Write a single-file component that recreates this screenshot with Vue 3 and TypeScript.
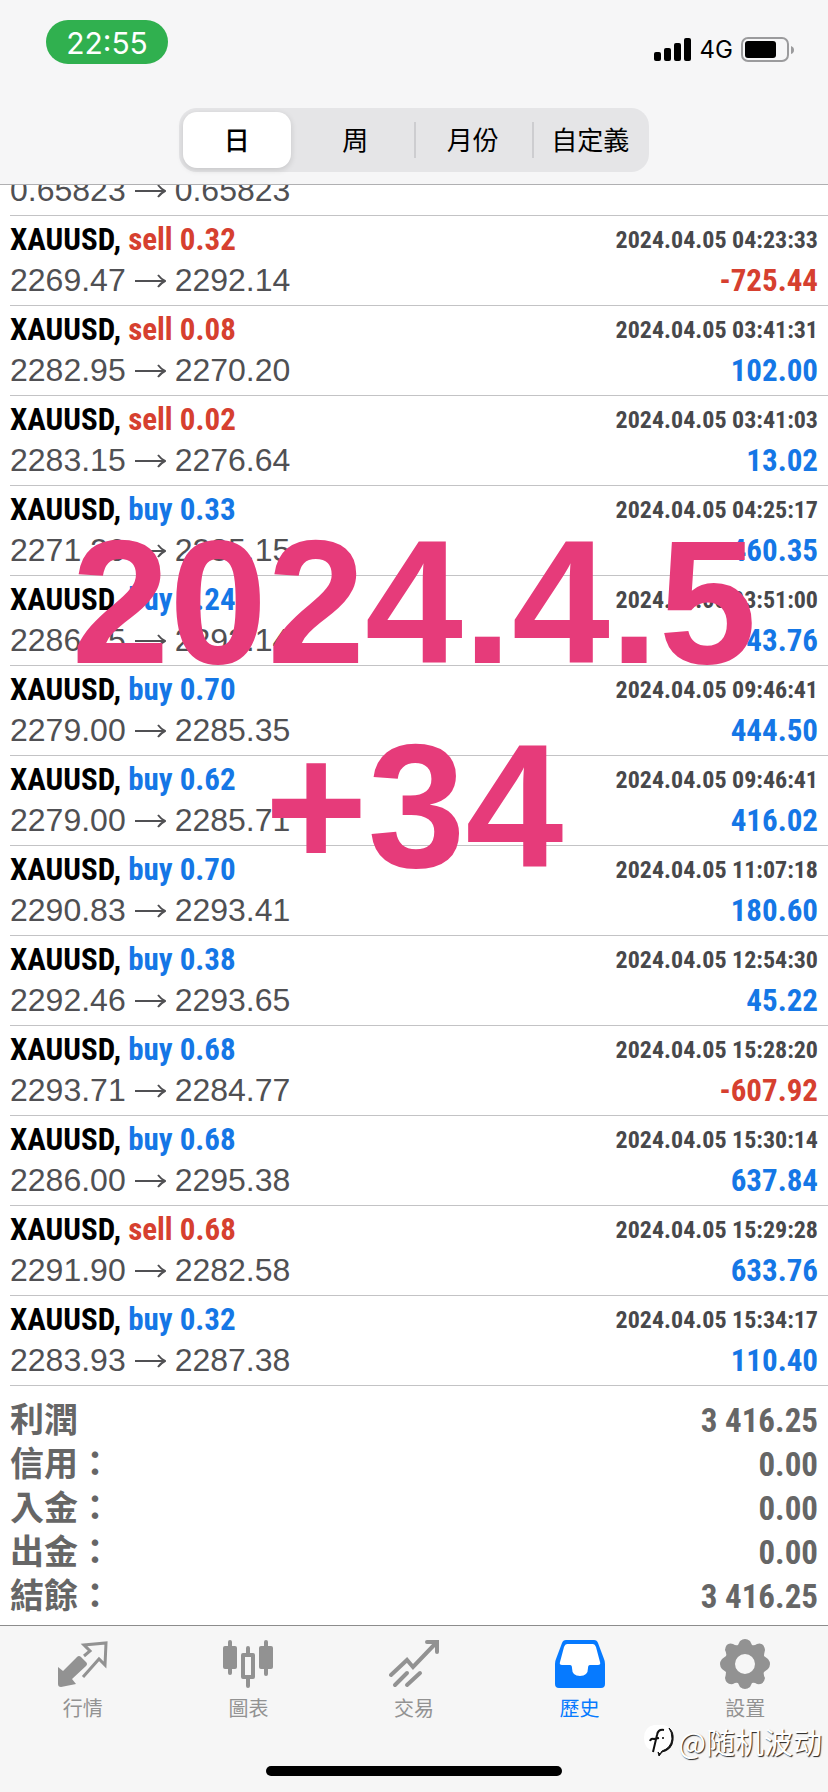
<script setup lang="ts">
import { ref } from 'vue'

interface Deal {
  side: 'buy' | 'sell'
  volume: string
  open: string
  close: string
  time: string
  profit: string
}

const periods: string[] = ['日', '周', '月份', '自定義']
const period = ref(0)

const makeDeal = (
  side: 'buy' | 'sell',
  volume: string,
  open: string,
  close: string,
  time: string,
  profit: string,
): Deal => ({ side, volume, open, close, time, profit })

const deals: Deal[] = [
  makeDeal('sell', '0.32', '2269.47', '2292.14', '04:23:33', '-725.44'),
  makeDeal('sell', '0.08', '2282.95', '2270.20', '03:41:31', '102.00'),
  makeDeal('sell', '0.02', '2283.15', '2276.64', '03:41:03', '13.02'),
  makeDeal('buy', '0.33', '2271.20', '2285.15', '04:25:17', '460.35'),
  makeDeal('buy', '0.24', '2286.15', '2292.14', '03:51:00', '143.76'),
  makeDeal('buy', '0.70', '2279.00', '2285.35', '09:46:41', '444.50'),
  makeDeal('buy', '0.62', '2279.00', '2285.71', '09:46:41', '416.02'),
  makeDeal('buy', '0.70', '2290.83', '2293.41', '11:07:18', '180.60'),
  makeDeal('buy', '0.38', '2292.46', '2293.65', '12:54:30', '45.22'),
  makeDeal('buy', '0.68', '2293.71', '2284.77', '15:28:20', '-607.92'),
  makeDeal('buy', '0.68', '2286.00', '2295.38', '15:30:14', '637.84'),
  makeDeal('sell', '0.68', '2291.90', '2282.58', '15:29:28', '633.76'),
  makeDeal('buy', '0.32', '2283.93', '2287.38', '15:34:17', '110.40'),
]

const totals: { label: string; value: string }[] = [
  { label: '利潤', value: '3 416.25' },
  { label: '信用：', value: '0.00' },
  { label: '入金：', value: '0.00' },
  { label: '出金：', value: '0.00' },
  { label: '結餘：', value: '3 416.25' },
]

const tabs: { id: string; label: string }[] = [
  { id: 'quotes', label: '行情' },
  { id: 'chart', label: '圖表' },
  { id: 'trade', label: '交易' },
  { id: 'history', label: '歷史' },
  { id: 'settings', label: '設置' },
]
const tab = ref('history')
</script>

<template>
  <div class="screen">
    <header class="top">
      <div class="status">
        <span class="clock">22:55</span>
        <div class="indicators">
          <svg class="signal" viewBox="0 0 38 24" aria-hidden="true">
            <rect x="0" y="14" width="7" height="9" rx="2" />
            <rect x="10" y="10" width="7" height="13" rx="2" />
            <rect x="20" y="5" width="7" height="18" rx="2" />
            <rect x="30" y="0" width="7" height="23" rx="2" />
          </svg>
          <span class="network">4G</span>
          <svg class="battery" viewBox="0 0 54 26" aria-hidden="true">
            <rect x="1" y="1" width="46" height="23" rx="6" fill="none" stroke="#9b9b9d" stroke-width="2" />
            <rect x="4" y="4" width="31" height="17" rx="3" />
            <path d="M50 9q3 1 3 4t-3 4z" fill="#9b9b9d" />
          </svg>
        </div>
      </div>
      <div class="segments" role="group" aria-label="期間">
        <button
          v-for="(name, i) in periods"
          :key="name"
          type="button"
          :class="{ selected: period === i, divided: i > 1 }"
          :aria-pressed="period === i"
          @click="period = i"
        >
          {{ name }}
        </button>
      </div>
    </header>

    <main class="history">
      <ul class="deals">
        <li class="deal partial">
          <span class="prices">
            <span>0.65823</span>
            <svg viewBox="0 0 31 18" aria-hidden="true"><path d="M0 9H30M23 3Q26 7 30 9Q26 11 23 15" /></svg>
            <span>0.65823</span>
          </span>
        </li>
        <li v-for="deal in deals" :key="deal.time + deal.volume" class="deal">
          <div class="line">
            <span class="symbol">XAUUSD, <span :class="deal.side">{{ deal.side }} {{ deal.volume }}</span></span>
            <time class="time">2024.04.05 {{ deal.time }}</time>
          </div>
          <div class="line">
            <span class="prices">
              <span>{{ deal.open }}</span>
              <svg viewBox="0 0 31 18" aria-hidden="true"><path d="M0 9H30M23 3Q26 7 30 9Q26 11 23 15" /></svg>
              <span>{{ deal.close }}</span>
            </span>
            <span class="profit" :class="{ loss: deal.profit.startsWith('-') }">{{ deal.profit }}</span>
          </div>
        </li>
      </ul>

      <dl class="totals">
        <div v-for="row in totals" :key="row.label" class="total">
          <dt>{{ row.label }}</dt>
          <dd>{{ row.value }}</dd>
        </div>
      </dl>

      <p class="caption">2024.4.5<br />+34</p>
    </main>

    <footer class="bottom">
      <nav class="tabs">
        <button
          v-for="item in tabs"
          :key="item.id"
          type="button"
          :class="{ active: tab === item.id }"
          @click="tab = item.id"
        >
          <svg viewBox="0 0 50 50" aria-hidden="true">
            <g v-if="item.id === 'quotes'">
              <path d="M0 28L5 32L19 18Q21 16 23 18L28 23Q30 25 28 27L14 40L18 45L3 48Q0 48 0 45Z" fill="currentColor" />
              <path d="M26 17L32 12L26 6L48 4L47 26L41 20L25 38" fill="none" stroke="currentColor" stroke-width="3" />
            </g>
            <g v-else-if="item.id === 'chart'" fill="currentColor">
              <rect x="5" y="1" width="4" height="35" rx="2" />
              <rect x="0" y="7" width="14" height="23" rx="2" />
              <rect x="41" y="1" width="4" height="36" rx="2" />
              <rect x="36" y="7" width="14" height="23" rx="2" />
              <path d="M23 9q0-2 2-2t2 2v5h3q2 0 2 2v22q0 2-2 2h-3v7q0 2-2 2t-2-2v-7h-3q-2 0-2-2V16q0-2 2-2h3zM22 18v18h6V18z" fill-rule="evenodd" />
            </g>
            <g v-else-if="item.id === 'trade'" fill="none" stroke="currentColor" stroke-width="4" stroke-linecap="round">
              <path d="M2 36L18 21L24 28L46 5" />
              <path d="M38 3H48V13" stroke-linejoin="miter" />
              <path d="M6 46L18 34M18 46L31 34" />
            </g>
            <g v-else-if="item.id === 'history'">
              <path d="M12 5Q10 5 9 8L5 23Q4 26 7 26H43Q46 26 45 23L41 8Q40 5 38 5Z" fill="#fff" />
              <path d="M16 26H34V30Q33 37 25 37Q17 37 16 30Z" fill="#fff" />
              <path
                d="M11 1H39Q42 1 43 4L49 20Q50 22 50 25V45Q50 49 46 49H4Q0 49 0 45V25Q0 22 1 20L7 4Q8 1 11 1ZM12 5Q10 5 9 8L5 23Q4 26 7 26H15Q17 26 17 29Q17 37 25 37Q33 37 33 29Q33 26 35 26H43Q46 26 45 23L41 8Q40 5 38 5Z"
                fill="currentColor"
                fill-rule="evenodd"
              />
            </g>
            <path
              v-else
              d="M20 2Q25-2 30 2L32 6Q34 7 37 5Q44 3 45 11Q44 15 44 17L48 20Q52 25 48 30L44 33Q43 35 45 39Q44 46 37 45Q34 43 32 44L30 48Q25 52 20 48L18 44Q16 43 13 45Q6 46 5 39Q6 35 6 33L2 30Q-2 25 2 20L6 17Q7 15 5 11Q6 3 13 5Q16 7 18 6ZM25 15A10 10 0 1 0 25 35A10 10 0 1 0 25 15Z"
              fill="currentColor"
              fill-rule="evenodd"
            />
          </svg>
          <span>{{ item.label }}</span>
        </button>
      </nav>
      <div class="home-bar"></div>
      <div class="watermark">
        <svg viewBox="0 0 32 34" aria-hidden="true">
          <path d="M10 1H20Q28 3 28 14Q28 24 17 27L15 31V27H10Q0 25 0 14Q0 3 10 1Z" fill="#fff" />
          <path d="M25 4Q30 8 29 16Q28 26 18 28L15 32L14 28L16 30L18 27Q27 24 28 15Q28 8 25 4Z" fill="#111" stroke="#111" />
          <path d="M20 6Q14 5 13 11L9 28M6 17Q7 14 10 15L15 14" fill="none" stroke="#111" stroke-width="2" />
          <circle cx="19" cy="14" r="1" />
        </svg>
        <span>@随机波动</span>
      </div>
    </footer>
  </div>
</template>

<style>
body {
  margin: 0;
  background: #fff;
}
</style>

<style scoped>
.screen {
  display: flex;
  flex-direction: column;
  min-height: 100vh;
  font-family: "Liberation Sans", "Noto Sans CJK TC", sans-serif;
  color: #000;
}

button {
  margin: 0;
  padding: 0;
  border: 0;
  background: none;
  font: inherit;
  color: inherit;
}

.top {
  box-sizing: border-box;
  height: 185px;
  background: #f6f6f7;
  border-bottom: 1px solid #b0b0b2;
}

.status {
  display: flex;
  justify-content: space-between;
  align-items: flex-start;
  padding: 20px 33px 0 46px;
  font-family: Inter, sans-serif;
}

.clock {
  box-sizing: border-box;
  width: 122px;
  height: 44px;
  border-radius: 22px;
  background: #30b04f;
  color: #fff;
  font-size: 30px;
  line-height: 46px;
  text-align: center;
}

.indicators {
  display: flex;
  align-items: center;
  gap: 8px;
  padding-top: 16px;
}

.signal {
  width: 38px;
  height: 24px;
}

.network {
  font-size: 24px;
  line-height: 28px;
}

.battery {
  width: 54px;
  height: 26px;
}

.segments {
  display: grid;
  grid-template-columns: repeat(4, 1fr);
  box-sizing: border-box;
  width: 470px;
  height: 64px;
  margin: 44px auto 0;
  padding: 4px 0;
  border-radius: 18px;
  background: #e5e5e7;
  font-size: 26px;
}

.segments button {
  position: relative;
  padding-bottom: 3px;
  border-radius: 14px;
}

.segments .selected {
  margin: 0 6px 0 4px;
  background: #fff;
  font-weight: 500;
  box-shadow: 0 2px 6px rgba(0, 0, 0, 0.14);
}

.segments .divided::before {
  content: "";
  position: absolute;
  left: 0;
  top: 10px;
  bottom: 10px;
  width: 2px;
  background: #cdcdd0;
}

.history {
  position: relative;
  flex: 1;
}

.deals {
  margin: 0;
  padding: 0 0 0 10px;
  list-style: none;
}

.deal {
  box-sizing: border-box;
  height: 90px;
  padding: 3px 10px 4px 0;
  border-bottom: 1px solid #c3c3c5;
}

.partial {
  display: flex;
  align-items: flex-end;
  height: 31px;
  padding: 0 10px 4px 0;
  overflow: hidden;
}

.line {
  display: flex;
  justify-content: space-between;
  align-items: center;
  height: 41px;
}

.symbol,
.time,
.profit,
.total dd {
  font-family: "Roboto Condensed", "Liberation Sans", sans-serif;
  font-weight: 700;
}

.symbol {
  font-size: 31px;
}

.time {
  font-size: 24px;
  color: #48484b;
}

.profit {
  font-size: 31px;
  color: #1577e6;
}

.buy {
  color: #1577e6;
}

.sell,
.loss {
  color: #d6402f;
}

.prices {
  display: flex;
  align-items: center;
  gap: 9px;
  font-size: 32px;
  line-height: 41px;
  color: #505053;
}

.prices svg {
  width: 31px;
  height: 18px;
  fill: none;
  stroke: #505053;
  stroke-width: 2;
}

.totals {
  margin: 0;
  padding: 10px 10px 9px;
  color: #666;
}

.total {
  display: flex;
  justify-content: space-between;
  align-items: baseline;
  height: 44px;
}

.total dt {
  font-family: "Noto Sans CJK TC", sans-serif;
  font-size: 34px;
  font-weight: 700;
  line-height: 44px;
}

.total dd {
  margin: 0;
  font-size: 33px;
  line-height: 44px;
}

.caption {
  position: absolute;
  top: 315px;
  left: 0;
  right: 0;
  margin: 0;
  color: #e63b7a;
  font-size: 176px;
  font-weight: 700;
  line-height: 204px;
  text-align: center;
  pointer-events: none;
}

.bottom {
  position: relative;
  box-sizing: border-box;
  height: 168px;
  border-top: 1px solid #8c8c8c;
  background: #f6f6f6;
}

.tabs {
  display: grid;
  grid-template-columns: repeat(5, 1fr);
  padding-top: 13px;
  color: #929292;
}

.tabs button {
  display: flex;
  flex-direction: column;
  align-items: center;
  gap: 5px;
  font-size: 20px;
  line-height: 30px;
}

.tabs svg {
  width: 50px;
  height: 50px;
}

.tabs .active {
  color: #067aff;
}

.home-bar {
  width: 296px;
  height: 10px;
  margin: 42px auto 0;
  border-radius: 5px;
  background: #000;
}

.watermark {
  position: absolute;
  right: 6px;
  bottom: 32px;
  display: flex;
  align-items: center;
  gap: 3px;
  color: #fff;
  font-family: "Noto Sans CJK SC", sans-serif;
  font-size: 29px;
  line-height: 40px;
  text-shadow: 1px 1px 1px #222;
}

.watermark svg {
  width: 32px;
  height: 34px;
}
</style>
